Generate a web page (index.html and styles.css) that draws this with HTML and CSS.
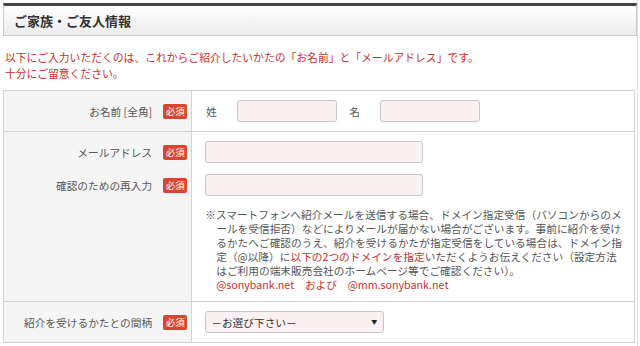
FILE: index.html
```html
<!DOCTYPE html>
<html lang="ja">
<head>
    <meta charset="UTF-8">
    <title>ご家族・ご友人情報</title>
    <link rel="stylesheet" href="styles.css">
</head>
<body>
    <div class="page">
        <h2 class="section-title">ご家族・ご友人情報</h2>

        <p class="lead">以下にご入力いただくのは、これからご紹介したいかたの「お名前」と「メールアドレス」です。<br>十分にご留意ください。</p>

        <table class="form-table">
            <tr class="row-single">
                <th>
                    <div class="label-line">お名前 [全角]<span class="req">必須</span></div>
                </th>
                <td>
                    <div class="name-fields">
                        <span class="name-label">姓</span>
                        <input type="text" class="field field-name">
                        <span class="name-label">名</span>
                        <input type="text" class="field field-name">
                    </div>
                </td>
            </tr>
            <tr>
                <th class="top">
                    <div class="label-line">メールアドレス<span class="req">必須</span></div>
                    <div class="label-line">確認のための再入力<span class="req">必須</span></div>
                </th>
                <td>
                    <div class="mail-fields">
                        <input type="text" class="field field-mail">
                        <input type="text" class="field field-mail">
                    </div>
                    <p class="note">※スマートフォンへ紹介メールを送信する場合、ドメイン指定受信（パソコンからのメ<br>ールを受信拒否）などによりメールが届かない場合がございます。事前に紹介を受け<br>るかたへご確認のうえ、紹介を受けるかたが指定受信をしている場合は、ドメイン指<br>定（@以降）に<span class="red">以下の2つのドメインを指定</span>いただくようお伝えください（設定方法<br>はご利用の端末販売会社のホームページ等でご確認ください）。<br><span class="red">@sonybank.net　および　@mm.sonybank.net</span></p>
                </td>
            </tr>
            <tr class="row-single">
                <th>
                    <div class="label-line">紹介を受けるかたとの間柄<span class="req">必須</span></div>
                </th>
                <td>
                    <div class="select-wrap">
                        <select class="field field-select">
                            <option>－お選び下さい－</option>
                        </select>
                    </div>
                </td>
            </tr>
        </table>
    </div>
</body>
</html>
```

FILE: styles.css
```css
* {
    margin: 0;
    padding: 0;
    box-sizing: border-box;
}

body {
    font-family: "Noto Sans CJK JP", "Noto Sans", sans-serif;
    font-size: 10.7px;
    color: #555;
    background: #fff;
}

.page {
    width: 638px;
    min-height: 346px;
    padding: 3px 0 0 3px;
    border-right: 1px solid #ddd;
}

.section-title {
    border-top: 3px solid #444;
    border-left: 1px solid #ccc;
    border-right: 1px solid #ccc;
    border-bottom: 1px solid #ccc;
    background: linear-gradient(#fff, #ececec);
    height: 33px;
    padding: 0 10px;
    font-size: 13px;
    font-weight: bold;
    line-height: 29px;
    color: #333;
}

.lead {
    margin: 13px 0 9px 2px;
    font-size: 10.8px;
    line-height: 16px;
    color: #c9302c;
    white-space: nowrap;
}

.form-table {
    width: 632px;
    border-collapse: collapse;
    border: 1px solid #d3d3d3;
}

.form-table th,
.form-table td {
    border: 1px solid #d3d3d3;
    vertical-align: middle;
    text-align: left;
    font-weight: normal;
}

.form-table th {
    width: 191px;
    background: #f5f5f5;
    padding: 9px 4px 9px 0;
}

.form-table th.top {
    vertical-align: top;
}

.form-table td {
    padding: 9px 12px 9px 13px;
}

.row-single th,
.row-single td {
    height: 41px;
}

.label-line {
    display: flex;
    justify-content: flex-end;
    align-items: center;
    height: 22px;
    white-space: nowrap;
}

.label-line + .label-line {
    margin-top: 11px;
}

.req {
    display: inline-block;
    margin-left: 11px;
    width: 24px;
    height: 15px;
    line-height: 15px;
    border-radius: 2px;
    background: #d9452f;
    color: #fff;
    font-size: 9.5px;
    text-align: center;
}

.field {
    display: block;
    height: 22px;
    border: 1px solid #c8c8c8;
    border-radius: 3px;
    background: #fcf0f3;
    font-family: inherit;
    font-size: 10.7px;
    color: #333;
    outline: none;
}

.name-fields {
    display: flex;
    align-items: center;
}

.name-label {
    padding-left: 1px;
    width: 32px;
}

.field-name {
    width: 100px;
    margin-right: 11px;
}

.mail-fields {
    display: flex;
    flex-direction: column;
    gap: 11px;
}

.field-mail {
    width: 218px;
}

.note {
    margin-top: 12px;
    line-height: 14px;
    white-space: nowrap;
    padding-left: 11px;
    text-indent: -11px;
}

.red {
    color: #c9302c;
}

.select-wrap {
    position: relative;
    width: 179px;
}

.field-select {
    appearance: none;
    -webkit-appearance: none;
    width: 179px;
    padding: 0 5px;
}

.select-wrap::after {
    content: "▼";
    position: absolute;
    right: 7px;
    top: 6px;
    font-size: 6px;
    color: #222;
    pointer-events: none;
}
```
